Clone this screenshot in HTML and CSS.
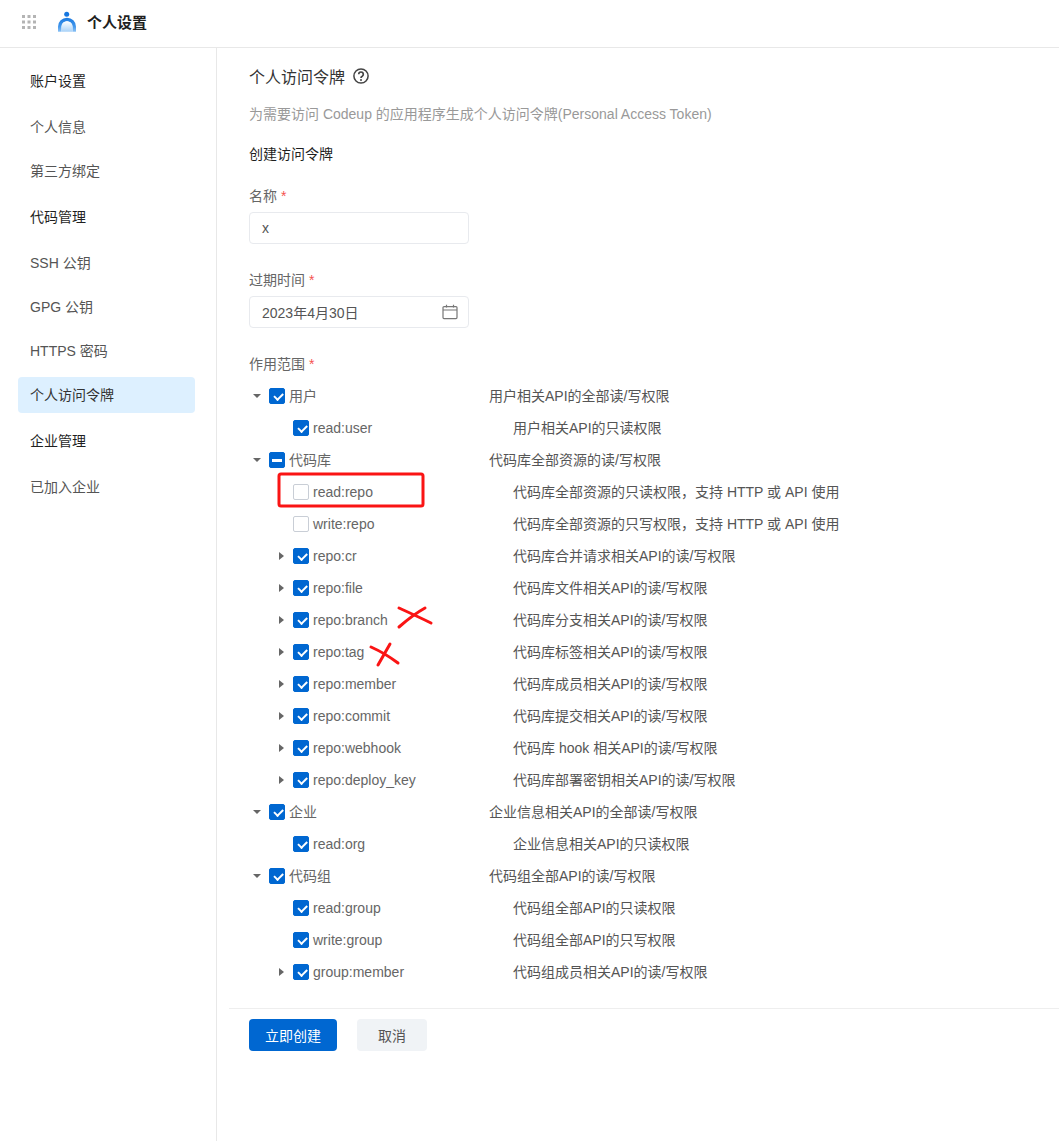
FILE: index.html
```html
<!DOCTYPE html>
<html lang="zh-CN">
<head>
<meta charset="utf-8">
<title>个人设置</title>
<link rel="stylesheet" href="styles.css">
</head>
<body>
<header class="topbar">
  <svg class="apps" width="16" height="16" viewBox="0 0 16 16"><g fill="#b4b4b4"><rect x="1" y="1" width="3" height="3"/><rect x="6.5" y="1" width="3" height="3"/><rect x="12" y="1" width="3" height="3"/><rect x="1" y="6.5" width="3" height="3"/><rect x="6.5" y="6.5" width="3" height="3"/><rect x="12" y="6.5" width="3" height="3"/><rect x="1" y="12" width="3" height="3"/><rect x="6.5" y="12" width="3" height="3"/><rect x="12" y="12" width="3" height="3"/></g></svg>
  <svg class="logo" width="20" height="22" viewBox="0 0 20 22">
    <defs><linearGradient id="lg" x1="0" y1="0" x2="0" y2="1"><stop offset="0" stop-color="#1b7ae0"/><stop offset="0.6" stop-color="#3f95ec"/><stop offset="1" stop-color="#8cc2f5"/></linearGradient>
    <linearGradient id="lh" x1="0" y1="0" x2="0" y2="1"><stop offset="0" stop-color="#ffffff"/><stop offset="1" stop-color="#a9d2f8"/></linearGradient></defs>
    <circle cx="9.7" cy="4.3" r="2.5" fill="#1677e0"/>
    <path d="M1 21.7V16.7a9 9 0 0 1 18 0v5h-3.5v-5a5.5 5.5 0 0 0-11 0v5z" fill="url(#lg)"/>
    <path d="M4.5 21.7v-5a5.5 5.5 0 0 1 11 0v5z" fill="url(#lh)"/>
  </svg>
  <span class="app-title">个人设置</span>
</header>
<div class="layout">
  <nav class="sidebar">
    <div class="nav-group">账户设置</div>
    <a class="nav-item first">个人信息</a>
    <a class="nav-item">第三方绑定</a>
    <div class="nav-group">代码管理</div>
    <a class="nav-item first">SSH 公钥</a>
    <a class="nav-item">GPG 公钥</a>
    <a class="nav-item">HTTPS 密码</a>
    <a class="nav-item active">个人访问令牌</a>
    <div class="nav-group">企业管理</div>
    <a class="nav-item first">已加入企业</a>
  </nav>
  <main class="content">
    <section class="form-area">
      <h1 class="page-title">个人访问令牌
        <svg class="help" width="16" height="16" viewBox="0 0 16 16"><circle cx="8" cy="8" r="7.1" fill="none" stroke="#444" stroke-width="1.5"/><path d="M5.7 6.3a2.3 2.3 0 1 1 3.5 2c-.8.4-1.2.8-1.2 1.6" fill="none" stroke="#444" stroke-width="1.7"/><circle cx="8" cy="12" r="1" fill="#444"/></svg>
      </h1>
      <p class="page-desc">为需要访问 Codeup 的应用程序生成个人访问令牌(Personal Access Token)</p>
      <h2 class="sub-title">创建访问令牌</h2>

      <label class="field-label">名称 <i>*</i></label>
      <div class="input">x</div>

      <label class="field-label">过期时间 <i>*</i></label>
      <div class="input">2023年4月30日
        <svg class="cal" width="16" height="16" viewBox="0 0 16 16"><g fill="none" stroke="#777" stroke-width="1.2"><rect x="1" y="2.6" width="14" height="12" rx="1"/><path d="M1 6h14M4.5 .8v2.6M11.5 .8v2.6"/></g></svg>
      </div>

      <label class="field-label">作用范围 <i>*</i></label>
      <div class="tree">
        <div class="row"><span class="caret down"></span><span class="cb on"></span><span class="name">用户</span><span class="desc">用户相关API的全部读/写权限</span></div>
        <div class="row child"><span class="caret none"></span><span class="cb on"></span><span class="name">read:user</span><span class="desc">用户相关API的只读权限</span></div>
        <div class="row"><span class="caret down"></span><span class="cb half"></span><span class="name">代码库</span><span class="desc">代码库全部资源的读/写权限</span></div>
        <div class="row child"><span class="caret none"></span><span class="cb"></span><span class="name">read:repo</span><span class="desc">代码库全部资源的只读权限，支持 HTTP 或 API 使用</span></div>
        <div class="row child"><span class="caret none"></span><span class="cb"></span><span class="name">write:repo</span><span class="desc">代码库全部资源的只写权限，支持 HTTP 或 API 使用</span></div>
        <div class="row child"><span class="caret right"></span><span class="cb on"></span><span class="name">repo:cr</span><span class="desc">代码库合并请求相关API的读/写权限</span></div>
        <div class="row child"><span class="caret right"></span><span class="cb on"></span><span class="name">repo:file</span><span class="desc">代码库文件相关API的读/写权限</span></div>
        <div class="row child"><span class="caret right"></span><span class="cb on"></span><span class="name">repo:branch</span><span class="desc">代码库分支相关API的读/写权限</span></div>
        <div class="row child"><span class="caret right"></span><span class="cb on"></span><span class="name">repo:tag</span><span class="desc">代码库标签相关API的读/写权限</span></div>
        <div class="row child"><span class="caret right"></span><span class="cb on"></span><span class="name">repo:member</span><span class="desc">代码库成员相关API的读/写权限</span></div>
        <div class="row child"><span class="caret right"></span><span class="cb on"></span><span class="name">repo:commit</span><span class="desc">代码库提交相关API的读/写权限</span></div>
        <div class="row child"><span class="caret right"></span><span class="cb on"></span><span class="name">repo:webhook</span><span class="desc">代码库 hook 相关API的读/写权限</span></div>
        <div class="row child"><span class="caret right"></span><span class="cb on"></span><span class="name">repo:deploy_key</span><span class="desc">代码库部署密钥相关API的读/写权限</span></div>
        <div class="row"><span class="caret down"></span><span class="cb on"></span><span class="name">企业</span><span class="desc">企业信息相关API的全部读/写权限</span></div>
        <div class="row child"><span class="caret none"></span><span class="cb on"></span><span class="name">read:org</span><span class="desc">企业信息相关API的只读权限</span></div>
        <div class="row"><span class="caret down"></span><span class="cb on"></span><span class="name">代码组</span><span class="desc">代码组全部API的读/写权限</span></div>
        <div class="row child"><span class="caret none"></span><span class="cb on"></span><span class="name">read:group</span><span class="desc">代码组全部API的只读权限</span></div>
        <div class="row child"><span class="caret none"></span><span class="cb on"></span><span class="name">write:group</span><span class="desc">代码组全部API的只写权限</span></div>
        <div class="row child"><span class="caret right"></span><span class="cb on"></span><span class="name">group:member</span><span class="desc">代码组成员相关API的读/写权限</span></div>
      </div>
    </section>
    <footer class="actions">
      <button class="btn primary">立即创建</button>
      <button class="btn plain">取消</button>
    </footer>
  </main>
</div>
<svg class="marks" width="1059" height="1141" viewBox="0 0 1059 1141">
  <rect x="279" y="474" width="144" height="32" rx="2" fill="none" stroke="#fa1414" stroke-width="3"/>
  <g fill="none" stroke="#fa1414" stroke-width="3" stroke-linecap="round">
    <path d="M399 627C407 620 416 613 425 608"/>
    <path d="M399 608C410 613 421 618 431 623"/>
    <path d="M371 647C380 651 390 657 398 663"/>
    <path d="M390 644C386 651 382 658 378 665"/>
  </g>
</svg>
</body>
</html>
```
FILE: styles.css
```css
* { box-sizing: border-box; }
html, body { margin: 0; padding: 0; background: #fff; }
body {
  position: relative;
  width: 1059px;
  height: 1141px;
  overflow: hidden;
  font-family: "Liberation Sans", "Noto Sans CJK SC", sans-serif;
  font-size: 14px;
  color: #333;
}
.topbar {
  display: flex;
  align-items: center;
  height: 48px;
  border-bottom: 1px solid #e8e8e8;
  padding-left: 21px;
  padding-bottom: 4px;
}
.apps { flex: none; }
.logo { flex: none; margin-left: 20px; margin-top: -1px; }
.app-title { margin-left: 10px; font-size: 15px; font-weight: 700; color: #1f1f1f; }
.layout { display: flex; height: 1093px; }
.sidebar {
  width: 217px;
  flex: none;
  border-right: 1px solid #e8e8e8;
  padding: 15px 21px 0 18px;
}
.nav-group, .nav-item {
  display: block;
  height: 36px;
  line-height: 36px;
  padding-left: 12px;
  border-radius: 4px;
}
.nav-group { color: #1f1f1f; margin-top: 10px; }
.nav-group:first-child { margin-top: 0; }
.nav-item { color: #555; margin-top: 8px; }
.nav-item.first { margin-top: 10px; }
.nav-item.active { background: #ddf0ff; color: #333; }
.content { flex: 1; min-width: 0; padding-left: 12px; }
.form-area { padding-left: 20px; }
.page-title {
  display: flex;
  align-items: center;
  gap: 8px;
  margin: 16px 0 0;
  height: 24px;
  font-size: 16px;
  font-weight: 400;
  color: #333;
}
.help { flex: none; }
.page-desc { margin: 15px 0 0; height: 22px; line-height: 22px; color: #999; }
.sub-title { margin: 18px 0 0; height: 22px; line-height: 22px; font-size: 14px; font-weight: 400; color: #1f1f1f; }
.field-label { display: block; height: 22px; line-height: 22px; margin-top: 20px; color: #666; }
.field-label i { font-style: normal; color: #f5534f; }
.input {
  display: flex;
  align-items: center;
  justify-content: space-between;
  width: 220px;
  height: 32px;
  margin-top: 5px;
  padding: 0 10px 0 12px;
  border: 1px solid #e8eaee;
  border-radius: 4px;
  color: #555;
}
.input + .field-label { margin-top: 25px; }
.cal { flex: none; }
.tree { padding-top: 5px; }
.row { display: flex; align-items: center; height: 32px; line-height: 32px; }
.row.child { padding-left: 24px; }
.caret { flex: none; width: 20px; height: 32px; position: relative; }
.caret::after { content: ""; position: absolute; }
.caret.down::after {
  left: 4px; top: 14px;
  border-left: 4px solid transparent;
  border-right: 4px solid transparent;
  border-top: 4px solid #666;
}
.caret.right::after {
  left: 6px; top: 12px;
  border-top: 4px solid transparent;
  border-bottom: 4px solid transparent;
  border-left: 5px solid #666;
}
.caret.none::after { display: none; }
.cb {
  flex: none;
  position: relative;
  width: 16px;
  height: 16px;
  border: 1px solid #c9ced6;
  border-radius: 2px;
  background: #fff;
}
.cb.on, .cb.half { background: #0067d1; border-color: #0067d1; }
.cb.on::after {
  content: "";
  position: absolute;
  left: 3.75px; top: 3.8px;
  width: 6.5px; height: 3.5px;
  border-left: 2px solid #fff;
  border-bottom: 2px solid #fff;
  transform: rotate(-45deg);
}
.cb.half::after {
  content: "";
  position: absolute;
  left: 2px; top: 5.5px;
  width: 10px; height: 3px;
  background: #fff;
}
.name { flex: none; width: 200px; margin-left: 4px; color: #666; }
.desc { color: #555; }
.actions {
  display: flex;
  gap: 20px;
  margin-top: 20px;
  padding: 10px 0 0 20px;
  border-top: 1px solid #eee;
}
.btn {
  height: 32px;
  border: 0;
  border-radius: 4px;
  font: inherit;
  padding: 0;
}
.btn.primary { width: 88px; background: #0067d1; color: #fff; }
.btn.plain { width: 70px; background: #f0f3f6; color: #555; }
.marks { position: absolute; left: 0; top: 0; pointer-events: none; }
```
